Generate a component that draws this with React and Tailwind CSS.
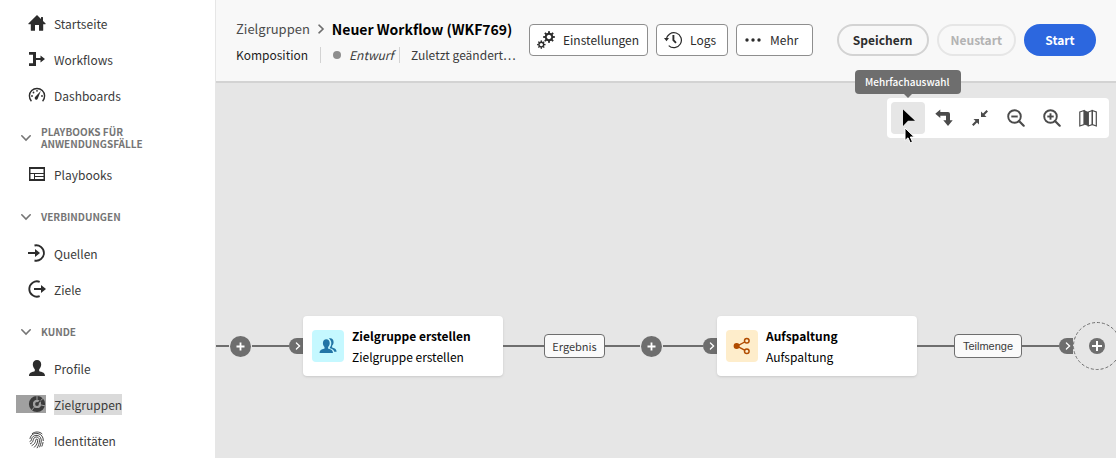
import React from "react";

const Icon = ({ children, className = "size-[18px]", box = "0 0 18 18" }) => (
  <svg viewBox={box} className={`shrink-0 ${className}`} fill="currentColor" aria-hidden="true">
    {children}
  </svg>
);

const HomeIcon = () => (
  <Icon>
    <path d="M9 1 0.4 9.6q-.3.6.3.6H2.800V16.200q0 .6.600.6H7V11h4v5.800h3.600q.6 0 .6-.600V10.200h2.100q.6 0 .3-.6L15 7V3.500q0-.4-.4-.4h-1.200q-.4 0-.4.4V5z" />
  </Icon>
);

const WorkflowIcon = () => (
  <Icon>
    <path d="M1 2h7v6h4.500V5.500L17 9l-4.500 3.500V10H8v6H1v-2.800h4V4.800H1z" />
  </Icon>
);

const GaugeIcon = () => (
  <Icon>
    <path d="M3.400 15.200a7.600 7.600 0 1 1 11.200 0" fill="none" stroke="currentColor" strokeWidth="1.400" />
    <path d="M12.800 5 9.900 12.200a1.600 1.600 0 1 1-2.600-1.400z" />
    <circle cx="4" cy="10" r=".9" />
    <circle cx="5.500" cy="6.500" r=".9" />
    <circle cx="9" cy="4.800" r=".9" />
    <circle cx="14" cy="10" r=".9" />
  </Icon>
);

const PlaybookIcon = () => (
  <Icon>
    <path
      fillRule="evenodd"
      d="M1 2h16v14H1zM2.500 4v4h13V4zM2.500 9v5H6V9zM7 9v2h8.500V9zM7 12v2h8.500v-2z"
    />
  </Icon>
);

const SourceIcon = () => (
  <Icon>
    <path d="M6.500 1.500A7.700 7.700 0 1 1 6.500 16.500" fill="none" stroke="currentColor" strokeWidth="1.800" />
    <path d="M0 8h7V5l5 4-5 4v-3H0z" />
  </Icon>
);

const TargetIcon = () => (
  <Icon>
    <path d="M11.700 1.800A7.700 7.700 0 1 0 11.700 16.200" fill="none" stroke="currentColor" strokeWidth="1.800" />
    <path d="M6 8h7V5l5 4-5 4v-3H6z" />
  </Icon>
);

const UserIcon = () => (
  <Icon>
    <path d="M9 1c2.500 0 4.200 1.700 4.200 4.300 0 2-.8 3.700-2 4.900v1.500c0 .4.300.6.700.7 3 .6 5.100 1.400 5.100 4.600H1c0-3.200 2.100-4 5.100-4.600.4-.1.700-.3.700-.7v-1.500c-1.200-1.200-2-2.900-2-4.900C4.800 2.700 6.500 1 9 1z" />
  </Icon>
);

const SegmentIcon = () => (
  <Icon>
    <circle cx="9" cy="9" r="6" fill="none" stroke="currentColor" strokeWidth="4.200" />
    <path d="M9 9V0M9 9 16.500 2M9 9l8.500 2M9 9l-6 7" stroke="#a0a0a0" strokeWidth="1" />
    <circle cx="9" cy="9" r="4" fill="#a0a0a0" />
    <circle cx="9" cy="9" r="1.900" />
    <path d="M9 9l3.500-3.500" stroke="currentColor" strokeWidth="1.200" />
  </Icon>
);

const FingerprintIcon = () => (
  <Icon>
    <g fill="none" stroke="currentColor" strokeWidth=".9" strokeLinecap="round">
      <path d="M4.200 2.600C7 .4 11.500.3 14 2.800" />
      <path d="M2 7.500C3 2.800 7 2 10 2.600c3.500.7 5.500 3.500 5.300 7" />
      <path d="M2 10.500c1.500-.5 1.300-1.600 1.700-2.900C5 3.700 10.500 3.300 12.500 6.500c1.600 2.800.5 6.500-.8 9.400" />
      <path d="M2.500 12.700C6 11.500 4.500 7.500 7 6.300c2.500-1 4.500.7 4.500 3.200 0 2.700-1 5-2.300 7.300" />
      <path d="M4 14.500c3-1.500 3.500-3.500 3.700-5.500.2-1.300 2-1.200 2 .2 0 2.500-1.200 5-3.300 7" />
      <path d="M15 11.500c-.2 1.400-.6 2.600-1.100 3.700" />
    </g>
  </Icon>
);

const ChevronDown = () => (
  <Icon className="size-[10px]" box="0 0 10 10">
    <path d="M.8 2.800 5 7l4.200-4.200" fill="none" stroke="currentColor" strokeWidth="1.600" strokeLinecap="round" />
  </Icon>
);

const ChevronRight = ({ className }) => (
  <Icon className={className} box="0 0 10 10">
    <path d="M3 1.200 7 5 3 8.800" fill="none" stroke="currentColor" strokeWidth="1.600" strokeLinecap="round" />
  </Icon>
);

const teeth = [0, 45, 90, 135, 180, 225, 270, 315];
const Gear = ({ x, y, r }) => (
  <g transform={`translate(${x} ${y}) scale(${r})`}>
    <circle r=".6" fill="none" stroke="currentColor" strokeWidth=".36" />
    {teeth.map((a) => (
      <rect key={a} x="-.17" y="-1.080" width=".34" height=".42" transform={`rotate(${a})`} />
    ))}
  </g>
);

const GearsIcon = () => (
  <Icon>
    <Gear x={12} y={6} r={5.400} />
    <Gear x={4.300} y={13.600} r={3.900} />
  </Icon>
);

const HistoryIcon = () => (
  <Icon>
    <path d="M2.400 8.500A7.500 7.500 0 1 1 4.700 14.600" fill="none" stroke="currentColor" strokeWidth="1.200" />
    <path d="M0 7h5L2.500 10.300z" />
    <path d="M9.400 4v5.200l2.600 2.600" fill="none" stroke="currentColor" strokeWidth="1.900" />
  </Icon>
);

const MoreIcon = () => (
  <Icon>
    <circle cx="3" cy="9" r="1.700" />
    <circle cx="9" cy="9" r="1.700" />
    <circle cx="15" cy="9" r="1.700" />
  </Icon>
);

const SelectIcon = () => (
  <Icon>
    <path d="M4 .5v16.500l5-5.200h7z" />
  </Icon>
);

const TurnIcon = () => (
  <Icon>
    <path d="M.3 4.800 5.300.5v2.600H13q2 0 2 2v6.100h2.700L13 17 8.300 11.200H11V6.700H5.300V9.100z" />
  </Icon>
);

const CollapseIcon = () => (
  <Icon>
    <path d="M10 2.500V8h5.500l-2-2L17 2.500 15.500 1 12 4.500zM8 15.500V10H2.500l2 2L1 15.500 2.500 17 6 13.500z" />
  </Icon>
);

const ZoomIcon = ({ plus }) => (
  <Icon>
    <circle cx="7.500" cy="7.500" r="6.300" fill="none" stroke="currentColor" strokeWidth="1.900" />
    <path d="M12 12l4.700 4.700" stroke="currentColor" strokeWidth="2.200" strokeLinecap="round" />
    <path d="M4.300 7.500h6.400" stroke="currentColor" strokeWidth="1.900" />
    {plus && <path d="M7.500 4.300v6.400" stroke="currentColor" strokeWidth="1.900" />}
  </Icon>
);

const MapIcon = () => (
  <Icon>
    <path d="M.8 3 5 1.500v14L.8 17z" fill="none" stroke="currentColor" strokeWidth="1.200" />
    <path d="M5 1 9.300 3v14L5 15.500z" />
    <path d="M9.300 3l4-1.500v14l-4 1.500z" fill="none" stroke="currentColor" strokeWidth="1.200" />
    <path d="M13.300 1.500 17.300 3v14l-4-1.500z" fill="none" stroke="currentColor" strokeWidth="1.200" />
  </Icon>
);

const AudienceIcon = () => (
  <Icon>
    <path d="M7.300 2.200c2 0 3.400 1.500 3.400 3.700 0 1.700-.6 3-1.600 4v1.300c0 .3.200.5.500.6 2.400.6 4.400 1.400 4.400 4.200H.5c0-2.800 2-3.600 4.500-4.200.3-.1.500-.3.500-.6V9.900c-1-1-1.600-2.300-1.600-4 0-2.200 1.400-3.700 3.400-3.700z" />
    <path d="M9.800 1.600c2.500-1 4.800.5 4.800 3.400 0 1.600-.6 2.900-1.500 3.800v1.300c0 .3.200.5.500.6 2.300.6 4 1.600 4 4.100h-2.300c-.5-2-2-3-4.500-3.600V10.600c1-1.200 1.500-2.700 1.500-4.500 0-1.900-1-3.600-2.500-4.500z" />
  </Icon>
);

const SplitIcon = () => (
  <Icon>
    <path d="M4 9.200 13.500 4M4 9.200l9.500 5" stroke="currentColor" strokeWidth="1.400" />
    <circle cx="3.600" cy="9.100" r="3" />
    <circle cx="13.800" cy="3.800" r="2.300" fill="#feedcb" stroke="currentColor" strokeWidth="1.500" />
    <circle cx="13.800" cy="14.200" r="2.300" fill="#feedcb" stroke="currentColor" strokeWidth="1.500" />
  </Icon>
);

const NavItem = ({ icon, label, active }) => (
  <li>
    <a href="#" aria-current={active ? "page" : undefined} className="flex h-9 items-center gap-2 pl-4 text-[#3b3b3b]">
      <span className={active ? "bg-[#a0a0a0] pl-3" : "pl-3 text-[#2c2c2c]"}>{icon}</span>
      <span className={active ? "bg-[#dadada] leading-[21px]" : "leading-[21px]"}>{label}</span>
    </a>
  </li>
);

const NavSection = ({ label }) => (
  <li>
    <button
      type="button"
      className="flex h-[43px] w-full items-center gap-[10px] pr-16 pl-[21px] pt-[6px] text-left text-[10px] leading-3 font-bold text-[#757575] uppercase"
    >
      <ChevronDown />
      <span>{label}</span>
    </button>
  </li>
);

const HeaderButton = ({ icon, children, className = "" }) => (
  <button type="button" className={`flex h-8 items-center gap-2 rounded-[4px] border border-[#8e8e8e] bg-white pr-2 pl-[7px] text-[#2c2c2c] ${className}`}>
    {icon}
    {children}
  </button>
);

const Tool = ({ label, active, children }) => (
  <button
    type="button"
    aria-label={label}
    className={`flex h-8 w-[34px] items-center justify-center rounded-[4px] ${active ? "bg-[#e6e6e6] text-black" : "text-[#4b4b4b]"}`}
  >
    {children}
  </button>
);

const Line = ({ className }) => <div className={`h-[2px] shrink-0 bg-[#6e6e6e] ${className}`} />;

const AddButton = () => (
  <button type="button" aria-label="Aktivität hinzufügen" className="mx-px flex size-[21px] shrink-0 items-center justify-center rounded-full bg-[#6e6e6e] text-white">
    <Icon className="size-[9px]" box="0 0 9 9">
      <path d="M4.500.5v8M.5 4.500h8" stroke="currentColor" strokeWidth="1.800" />
    </Icon>
  </button>
);

const Port = () => (
  <div className="flex h-4 w-[14px] shrink-0 items-center justify-center rounded-l-full bg-[#6e6e6e] pl-1 text-white">
    <ChevronRight className="size-2" />
  </div>
);

const Label = ({ className, children }) => (
  <div className={`flex h-6 shrink-0 items-center justify-center rounded-[4px] border border-[#6e6e6e] bg-[#fafafa] text-[11px] text-[#3b3b3b] ${className}`}>
    {children}
  </div>
);

const Card = ({ icon, title, text, tint }) => (
  <article className="flex h-[60px] w-[200px] shrink-0 items-center gap-2 rounded-[4px] bg-white pb-px pl-[9px] text-black shadow-sm">
    <div className={`flex size-8 items-center justify-center rounded-[4px] ${tint}`}>{icon}</div>
    <div className="leading-[21px]">
      <h2 className="font-bold">{title}</h2>
      <p>{text}</p>
    </div>
  </article>
);

export default function App() {
  return (
    <div className="flex h-screen overflow-hidden bg-[#e6e6e6] font-['Noto_Sans_CJK_SC','Noto_Sans',sans-serif] text-xs leading-5">
      <nav className="w-[215px] shrink-0 overflow-hidden bg-white pt-[5px]">
        <ul>
          <NavItem icon={<HomeIcon />} label="Startseite" />
          <NavItem icon={<WorkflowIcon />} label="Workflows" />
          <NavItem icon={<GaugeIcon />} label="Dashboards" />
          <NavSection label="Playbooks für Anwendungsfälle" />
          <NavItem icon={<PlaybookIcon />} label="Playbooks" />
          <NavSection label="Verbindungen" />
          <NavItem icon={<SourceIcon />} label="Quellen" />
          <NavItem icon={<TargetIcon />} label="Ziele" />
          <NavSection label="Kunde" />
          <NavItem icon={<UserIcon />} label="Profile" />
          <NavItem icon={<SegmentIcon />} label="Zielgruppen" active />
          <NavItem icon={<FingerprintIcon />} label="Identitäten" />
        </ul>
      </nav>

      <div className="flex min-w-0 flex-1 flex-col border-l border-[#e6e6e6]">
        <header className="flex h-[83px] shrink-0 items-start border-b-2 border-[#d3d3d3] bg-[#f8f8f8] pt-4 pr-5 pl-5">
          <div className="w-[293px] shrink-0">
            <div className="flex h-[26px] items-center gap-[6px] whitespace-nowrap">
              <a href="#" className="text-[13px] text-[#4b4b4b]">Zielgruppen</a>
              <ChevronRight className="size-[10px] text-[#6e6e6e]" />
              <h1 className="text-sm font-bold text-black">Neuer Workflow (WKF769)</h1>
            </div>
            <div className="flex h-[26px] items-center whitespace-nowrap text-[#3b3b3b]">
              <span className="w-[84px] text-[#1e1e1e]">Komposition</span>
              <span className="flex h-4 w-20 items-center gap-2 border-x border-[#d3d3d3] pl-3 italic">
                <span className="size-2 rounded-full bg-[#8e8e8e]" />
                Entwurf
              </span>
              <span className="pl-[11px]">Zuletzt geändert…</span>
            </div>
          </div>
          <div className="flex gap-2 pt-2">
            <HeaderButton icon={<GearsIcon />}>Einstellungen</HeaderButton>
            <HeaderButton icon={<HistoryIcon />} className="min-w-[72px]">Logs</HeaderButton>
            <HeaderButton icon={<MoreIcon />} className="min-w-[77px]">Mehr</HeaderButton>
          </div>
          <div className="ml-auto flex gap-2 pt-2 font-bold">
            <button type="button" className="h-8 rounded-full border-2 border-[#d3d3d3] px-[14px] text-[#2c2c2c]">Speichern</button>
            <button type="button" disabled className="h-8 rounded-full border-2 border-[#e6e6e6] px-3 text-[#b3b3b3]">Neustart</button>
            <button type="button" className="h-8 w-[72px] rounded-full bg-[#2c67df] text-white">Start</button>
          </div>
        </header>

        <main className="flex flex-1 flex-col">
          <div className="flex justify-end pt-[15px] pr-[7px]">
            <div role="toolbar" aria-label="Arbeitsfläche" className="relative flex gap-[2px] rounded-[4px] bg-white p-1">
              <Tool label="Mehrfachauswahl" active><SelectIcon /></Tool>
              <Tool label="Drehen"><TurnIcon /></Tool>
              <Tool label="Anpassen"><CollapseIcon /></Tool>
              <Tool label="Verkleinern"><ZoomIcon /></Tool>
              <Tool label="Vergrößern"><ZoomIcon plus /></Tool>
              <Tool label="Karte"><MapIcon /></Tool>
              <div role="tooltip" className="absolute -top-7 -left-8 flex h-6 w-[106px] items-center rounded-[4px] bg-[#6e6e6e] pl-[10px] text-[10px] font-medium text-white">
                Mehrfachauswahl
                <svg viewBox="0 0 8 4" className="absolute top-6 left-[49px] h-1 w-2 fill-[#6e6e6e]" aria-hidden="true">
                  <path d="M0 0h8L4 4z" />
                </svg>
              </div>
              <svg viewBox="0 0 12 18" className="absolute top-[29px] left-[17px] h-[18px] w-3" aria-hidden="true">
                <path d="M1 1v12.500l3-2.700 2.200 5 2.300-1-2.200-4.800h4z" fill="#000" stroke="#fff" strokeWidth="1" />
              </svg>
            </div>
          </div>

          <div className="flex items-center overflow-hidden pt-[178px] pb-1">
            <Line className="w-[13px]" />
            <AddButton />
            <Line className="w-[37px]" />
            <Port />
            <Card icon={<AudienceIcon />} title="Zielgruppe erstellen" text="Zielgruppe erstellen" tint="bg-[#c5f8ff] text-[#2275a6]" />
            <Line className="w-[41px]" />
            <Label className="w-[61px]">Ergebnis</Label>
            <Line className="w-[35px]" />
            <AddButton />
            <Line className="w-[40px]" />
            <Port />
            <Card icon={<SplitIcon />} title="Aufspaltung" text="Aufspaltung" tint="bg-[#feedcb] text-[#b14c00]" />
            <Line className="w-[37px]" />
            <Label className="w-[68px] font-['Liberation_Sans',sans-serif]">Teilmenge</Label>
            <Line className="w-[37px]" />
            <Port />
            <button type="button" aria-label="Aktivität anhängen" className="flex size-12 shrink-0 items-center justify-center text-[#6e6e6e]">
              <Icon className="size-12" box="0 0 48 48">
                <circle cx="24" cy="24" r="23.500" fill="none" stroke="currentColor" strokeDasharray="3 2" />
                <circle cx="24" cy="24" r="8" />
                <path d="M24 19v10M19 24h10" stroke="#fff" strokeWidth="2" />
              </Icon>
            </button>
          </div>
        </main>
      </div>
    </div>
  );
}
